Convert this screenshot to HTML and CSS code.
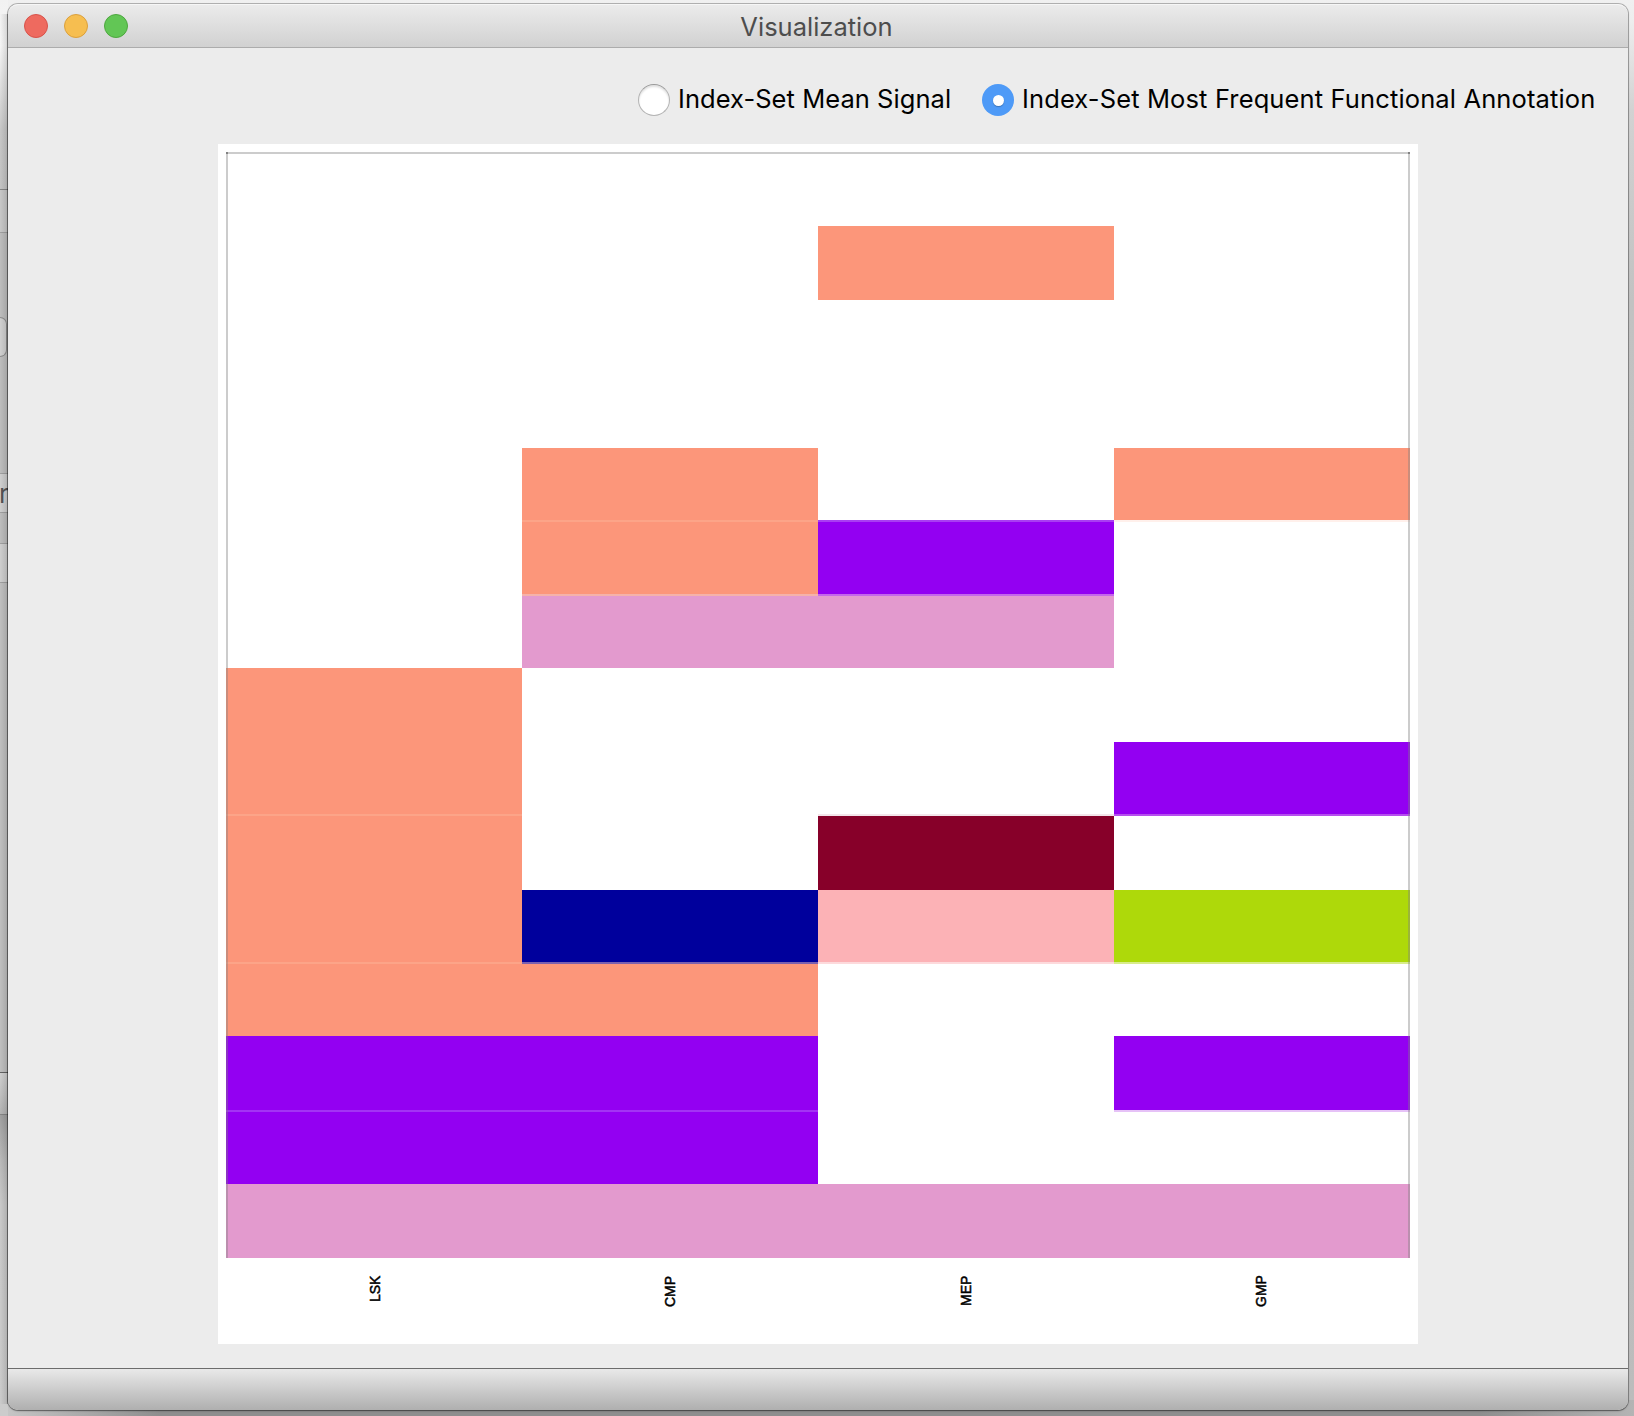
FILE: index.html
```html
<!DOCTYPE html>
<html lang="en">
<head>
<meta charset="utf-8">
<title>Visualization</title>
<link rel="stylesheet" href="styles.css">
</head>
<body>
<div class="desktop">
  <div class="behind">
    <div class="b-title"></div>
    <div class="b-tool"></div>
    <div class="b-body"><div class="b-button"></div></div>
    <div class="b-field">r</div>
    <div class="b-gap"></div>
    <div class="b-field b-field-2"></div>
    <div class="b-list"></div>
    <div class="b-status"></div>
    <div class="b-shadow"></div>
  </div>
  <div class="window">
    <header class="titlebar">
      <div class="lights"><i class="red"></i><i class="yellow"></i><i class="green"></i></div>
      <h1><span>Visualization</span></h1>
    </header>
    <main class="content">
      <div class="options">
        <label class="option mean"><i class="radio"></i><span>Index-Set Mean Signal</span></label>
        <label class="option annotation"><i class="radio checked"></i><span>Index-Set Most Frequent Functional Annotation</span></label>
      </div>
      <div class="panel">
        <div class="plot">
          <b></b><b></b><b></b><b></b>
          <b></b><b></b><b class="salmon"></b><b></b>
          <b></b><b></b><b></b><b></b>
          <b></b><b></b><b></b><b></b>
          <b></b><b class="salmon"></b><b></b><b class="salmon"></b>
          <b></b><b class="salmon s-salmon"></b><b class="purple s-purple"></b><b class="s-pale"></b>
          <b></b><b class="orchid s-rose"></b><b class="orchid s-violet"></b><b></b>
          <b class="salmon"></b><b></b><b></b><b></b>
          <b class="salmon"></b><b></b><b></b><b class="purple"></b>
          <b class="salmon s-salmon"></b><b></b><b class="maroon s-mauve"></b><b class="s-purple2"></b>
          <b class="salmon"></b><b class="navy"></b><b class="pink"></b><b class="lime"></b>
          <b class="salmon s-salmon"></b><b class="salmon s-slate"></b><b class="s-pink"></b><b class="s-lime"></b>
          <b class="purple"></b><b class="purple"></b><b></b><b class="purple"></b>
          <b class="purple s-grape"></b><b class="purple s-grape"></b><b></b><b class="s-lilac"></b>
          <b class="orchid"></b><b class="orchid"></b><b class="orchid"></b><b class="orchid"></b>
        </div>
        <div class="axis"><span>LSK</span><span>CMP</span><span>MEP</span><span>GMP</span></div>
      </div>
    </main>
    <footer class="statusbar"></footer>
  </div>
</div>
</body>
</html>
```
FILE: styles.css
```css
* { box-sizing: border-box; }
body { margin: 0; font-family: Inter, "Liberation Sans", sans-serif; }
.desktop {
  width: 1634px; height: 1416px; overflow: hidden; display: flex;
  background:
    linear-gradient(90deg, #c8c8c8, #8e8e8e 160px, #8e8e8e 1480px, #b4b4b4) 0 1400px / 100% 16px no-repeat,
    linear-gradient(#f0f0f0, #eee 20px, #d2d2d2 110px, #c2c2c2 300px, #bcbcbc);
}
.behind { width: 8px; height: 1416px; flex: none; display: flex; flex-direction: column; overflow: hidden; position: relative; }
.behind::after { content: ""; position: absolute; inset: 14px 0 12px 0; background: linear-gradient(90deg, transparent, rgba(0,0,0,.12) 7px, rgba(0,0,0,.32) 7px); }
.behind > div { flex: none; border-bottom: 1px solid #a0a0a0; }
.behind .b-title { height: 190px; background: linear-gradient(#f2f2f2, #f6f6f6 45px, #c8c8c8 130px, #c4c4c4); border-color: #858585; }
.behind .b-tool { height: 43px; background: #c8c8c8; }
.behind .b-body { height: 241px; background: #bebebe; padding-top: 84px; }
.b-button { width: 7px; height: 40px; border: 1px solid #8c8c8c; border-left: 0; border-radius: 0 7px 7px 0; background: #d0d0d0; }
.behind .b-field { height: 39px; background: #cfcfcf; font-size: 26px; line-height: 39px; color: #555; text-indent: -1px; }
.behind .b-gap { height: 31px; background: #bebebe; }
.behind .b-field-2 { height: 39px; }
.behind .b-list { height: 490px; background: #c0c0c0; border-color: #636363; }
.behind .b-status { height: 42px; background: linear-gradient(#d0d0d0, #b4b4b4); border-color: #858585; }
.behind .b-shadow { height: 301px; background: linear-gradient(#a0a0a0, #bababa 45px, #cacaca 90px, #ccc); border: 0; }

.window {
  width: 1620px; height: 1406px; margin-top: 4px; flex: none; display: flex; flex-direction: column;
  border-radius: 10px; overflow: visible; background: #ececec;
  box-shadow: 0 0 0 1px rgba(0,0,0,.26), 0 1px 2px rgba(0,0,0,.35);
  position: relative;
}
.titlebar {
  height: 44px; flex: none; display: grid; grid-template-columns: 1fr auto 1fr; align-items: center;
  background: linear-gradient(#ebebeb, #d1d1d1); border-radius: 10px 10px 0 0;
  border-top: 1px solid #f6f6f6; border-bottom: 1px solid #acacac;
}
.lights { display: flex; gap: 16px; padding-left: 16px; }
.lights i { width: 24px; height: 24px; border-radius: 50%; border: 1px solid; }
.red { background: #ee6a5f; border-color: #d8524a !important; }
.yellow { background: #f6be50; border-color: #dba03c !important; }
.green { background: #62c655; border-color: #4da73e !important; }
h1 { margin: 0; padding: 2px 3px 0 0; font-size: 25.5px; font-weight: 400; line-height: 40px; color: #4d4d4d; }
.content { height: 1320px; flex: none; }
.options { height: 96px; display: flex; justify-content: flex-end; padding: 36px 33px 0 0; }
.option { display: flex; height: 32px; align-items: center; gap: 8px; white-space: nowrap; font-size: 25.5px; line-height: 32px; color: #000; }
.option span { position: relative; top: -1px; }
.mean { width: 344px; letter-spacing: .05px; }
.annotation { width: 613px; letter-spacing: .13px; }
.radio { width: 32px; height: 32px; flex: none; border-radius: 50%; background: #fff; border: 1px solid #b4b4b4; border-top-color: #999; box-shadow: inset 0 2px 2px rgba(0,0,0,.12); }
.checked { border: 0; box-shadow: none; background: #4e9af7; display: grid; place-items: center; }
.checked::after { content: ""; width: 11px; height: 11px; border-radius: 50%; background: #fff; box-shadow: 0 1px 1px rgba(0,0,0,.25); }
.panel { width: 1200px; height: 1200px; margin-left: 210px; padding: 8px; background: #fff; }
.plot { width: 1184px; position: relative; display: grid; grid-template-columns: repeat(4, 296px); grid-template-rows: 74px 74px 74px 74px 72px 74px 74px 74px 72px 76px 72px 74px 74px 74px 74px; }
.plot::before, .plot::after { content: ""; position: absolute; inset: 0; pointer-events: none; }
.plot::before { border: solid rgba(128,128,128,.4); border-width: 0 2px; }
.plot::after { border-top: 2px solid rgba(0,0,0,.2); height: 0;
  background: linear-gradient(90deg, rgba(0,0,0,.2) 2px, transparent 2px, transparent 1182px, rgba(0,0,0,.2) 1182px); background-origin: border-box; }
.plot b { border: 0 solid transparent; }
.salmon { background: #fc967a; }
.purple { background: #9300f2; }
.orchid { background: #e39ace; }
.maroon { background: #870029; }
.navy { background: #00009c; }
.pink { background: #fcb2b6; }
.lime { background: #aed90a; }
.plot b[class*="s-"] { border-top-width: 2px; }
.plot .s-salmon { border-color: #fca488; }
.plot .s-purple { border-color: #a93df3; }
.plot .s-pale { border-color: #fff0eb; }
.plot .s-rose { border-color: #f5b2aa; }
.plot .s-violet { border-color: #c566ea; }
.plot .s-mauve { border-color: #f3e5ea; }
.plot .s-purple2 { border-color: #b64eee; }
.plot .s-slate { border-color: #7b60ae; }
.plot .s-pink { border-color: #fddadc; }
.plot .s-lime { border-color: #d8ec8c; }
.plot .s-grape { border-color: #a333f4; }
.plot .s-lilac { border-color: #e6c2f7; }
.axis { display: grid; grid-template-columns: repeat(4, 296px); padding-top: 18px; justify-items: center; }
.axis span { writing-mode: vertical-rl; transform: rotate(180deg); height: 31px; text-align: right; font: 14px/16px "Liberation Sans", sans-serif; color: #000; -webkit-text-stroke: .5px #000; }
.axis span:first-child { margin-left: 2px; }
.axis span:last-child { margin-right: 2px; }
.statusbar { height: 42px; flex: none; border-top: 1px solid #6c6c6c; background: linear-gradient(#e9e9e9, #afafaf); border-radius: 0 0 10px 10px; }
```
